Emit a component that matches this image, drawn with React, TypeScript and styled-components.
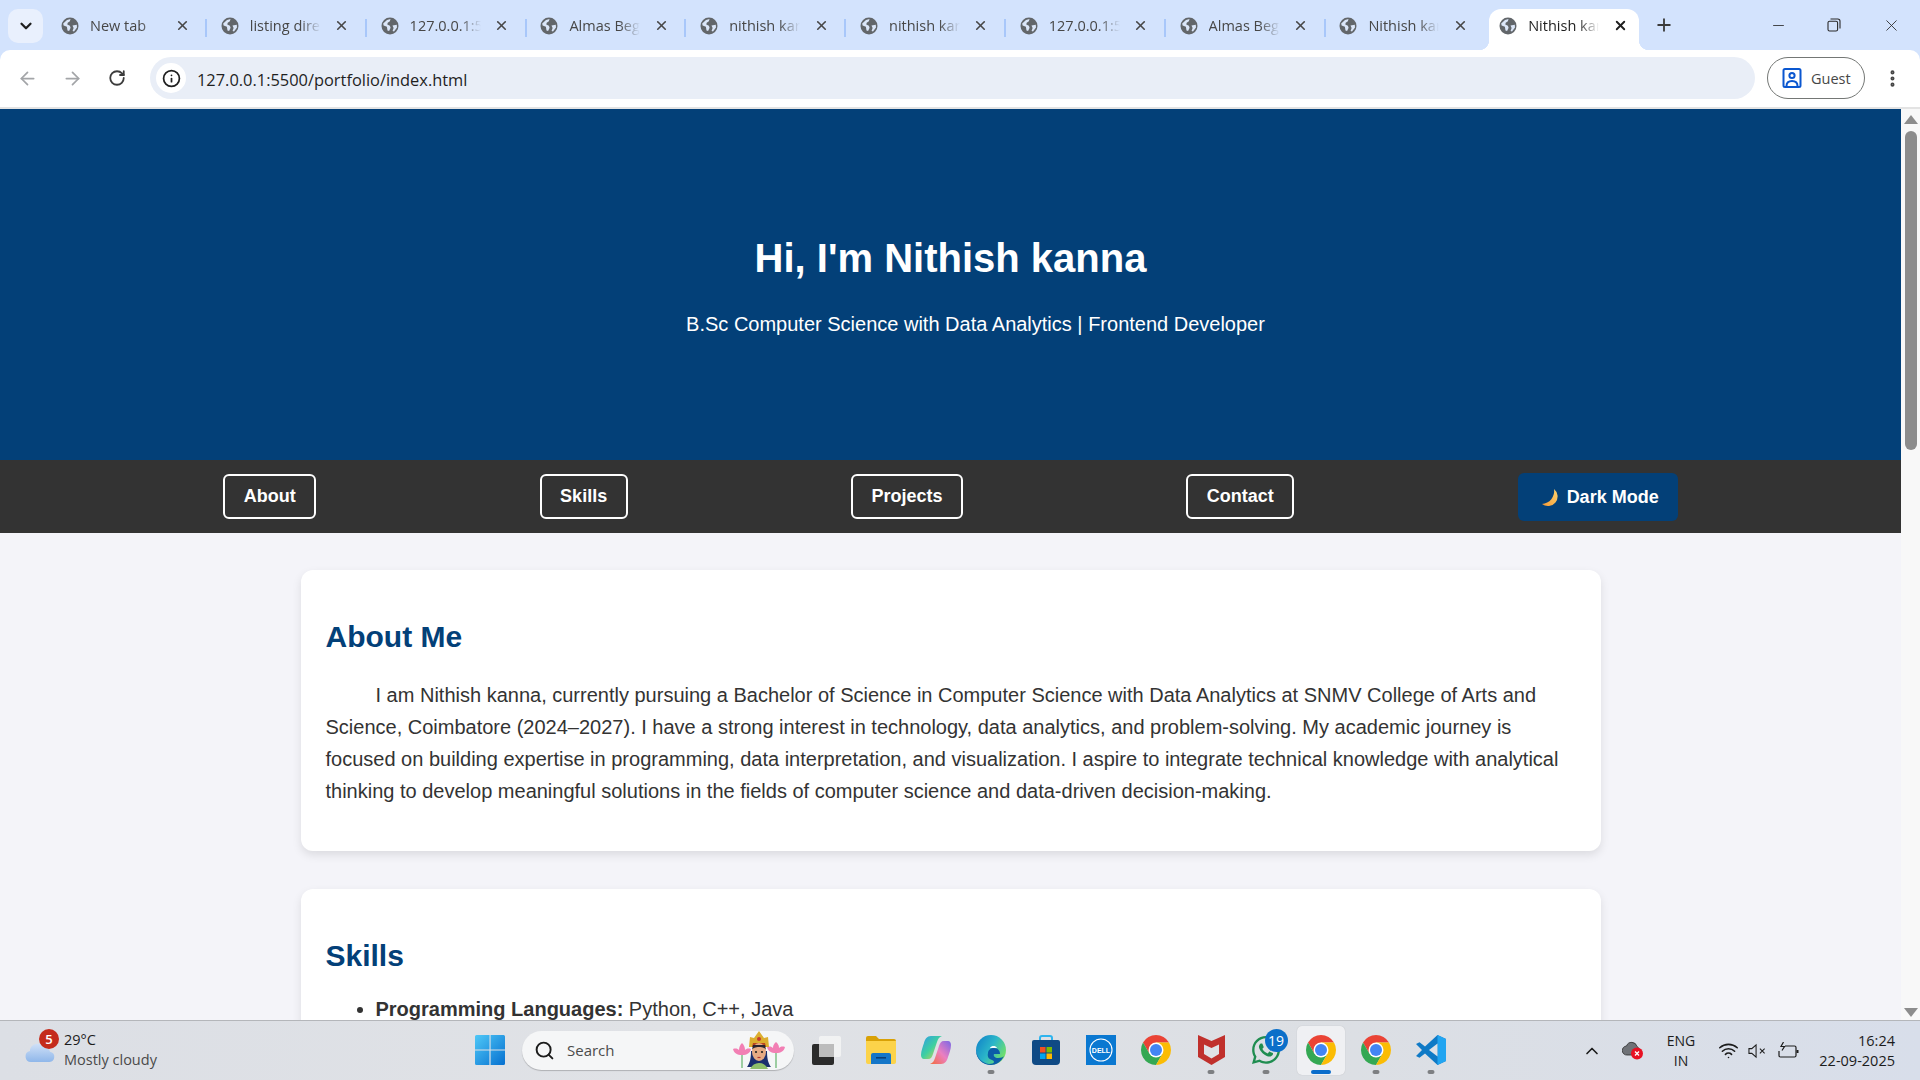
import React from "react";
import styled, { createGlobalStyle } from "styled-components";
import {
  ArrowLeft,
  ArrowRight,
  ChevronDown,
  ChevronUp,
  Info,
  Minus,
  MoreVertical,
  Plus,
  RotateCw,
  Search,
  Wifi,
  X,
} from "lucide-react";
import { FaWhatsapp } from "react-icons/fa";

const GlobalStyle = createGlobalStyle`
  html, body { margin: 0; padding: 0; height: 100%; overflow: hidden; }
  * { box-sizing: border-box; }
  body { font-family: "Liberation Sans", Arial, sans-serif; }
`;

const Screen = styled.div`
  width: 1920px;
  height: 1080px;
  display: flex;
  flex-direction: column;
  overflow: hidden;
  background: #d3e3fd;
`;

/* browser chrome */
const TabStrip = styled.div`
  height: 50px;
  display: flex;
  align-items: flex-end;
  flex-shrink: 0;
  position: relative;
  padding-left: 8px;
  font-family: "Open Sans", "Noto Sans", sans-serif;
`;

const TabSearch = styled.div`
  width: 35px;
  height: 34px;
  margin-bottom: 7px;
  margin-right: 8px;
  border-radius: 10px;
  background: #e9f0fd;
  display: flex;
  align-items: center;
  justify-content: center;
  color: #1f1f1f;
`;

const Tab = styled.div<{ $active?: boolean; $noSep?: boolean }>`
  position: relative;
  width: 150px;
  height: 41px;
  margin-right: 9.8px;
  padding: 0 11px 8px 10px;
  display: flex;
  align-items: center;
  background: ${(p) => (p.$active ? "#fff" : "transparent")};
  border-radius: 12px 12px 0 0;
  color: ${(p) => (p.$active ? "#1f1f1f" : "#474747")};

  &::after {
    content: "";
    position: absolute;
    display: ${(p) => (p.$noSep || p.$active ? "none" : "block")};
    right: -6px;
    top: 10px;
    width: 2px;
    height: 18px;
    background: #a8c7fa;
  }

  ${(p) =>
    p.$active &&
    `
    &::before {
      content: "";
      position: absolute;
      left: -10px;
      bottom: 0;
      width: 10px;
      height: 10px;
      background: radial-gradient(circle at 0 0, transparent 10px, #fff 10.5px);
    }
    &::after {
      display: block;
      right: -10px;
      top: auto;
      bottom: 0;
      width: 10px;
      height: 10px;
      background: radial-gradient(circle at 100% 0, transparent 10px, #fff 10.5px);
    }
  `}
`;

const TabTitle = styled.span`
  flex: 1;
  min-width: 0;
  margin-left: 11px;
  margin-right: 10px;
  font-size: 14.5px;
  white-space: nowrap;
  overflow: hidden;
  -webkit-mask-image: linear-gradient(90deg, #000 68%, transparent 96%);
  mask-image: linear-gradient(90deg, #000 68%, transparent 96%);
`;

const TabClose = styled.span`
  width: 16px;
  height: 16px;
  display: flex;
  align-items: center;
  justify-content: center;
  flex-shrink: 0;
`;

const NewTab = styled.div`
  position: relative;
  margin-left: 3px;
  margin-bottom: 13px;
  width: 24px;
  height: 24px;
  color: #3b3b3b;
  display: flex;
  align-items: center;
  justify-content: center;
`;

const WindowControls = styled.div`
  margin-left: auto;
  height: 50px;
  display: flex;
  align-items: center;
  color: #2b2b2b;
`;

const WindowButton = styled.div<{ $w: number }>`
  width: ${(p) => p.$w}px;
  display: flex;
  align-items: center;
  justify-content: center;
`;

const Toolbar = styled.div`
  height: 59px;
  flex-shrink: 0;
  background: #fff;
  border-radius: 10px 10px 0 0;
  border-bottom: 2px solid #e3e3e3;
  display: flex;
  align-items: center;
  padding-bottom: 1px;
`;

const NavIcon = styled.div<{ $w: number; $color: string }>`
  width: ${(p) => p.$w}px;
  display: flex;
  justify-content: center;
  color: ${(p) => p.$color};
`;

const Omnibox = styled.div`
  width: 1605px;
  height: 42px;
  margin-left: 6px;
  border-radius: 21px;
  background: #e9eef7;
  display: flex;
  align-items: center;
  padding-left: 6px;
  font-family: "Open Sans", "Noto Sans", sans-serif;
  font-size: 16.4px;
  color: #1f1f1f;

  span {
    position: relative;
    top: 1px;
  }
`;

const InfoChip = styled.div`
  width: 30px;
  height: 30px;
  border-radius: 50%;
  background: #fff;
  display: flex;
  align-items: center;
  justify-content: center;
  margin-right: 11px;
`;

const GuestPill = styled.div`
  width: 98px;
  height: 42px;
  margin-left: 12px;
  border: 1.5px solid #747775;
  border-radius: 21px;
  display: flex;
  align-items: center;
  padding-left: 14px;
  gap: 9px;
  font-family: "Open Sans", "Noto Sans", sans-serif;
  font-size: 14.5px;
  color: #474747;
`;

const MenuDots = styled.div`
  width: 55px;
  display: flex;
  justify-content: center;
  color: #474747;
`;

/* the page inside the browser */
const Viewport = styled.div`
  flex: 1;
  min-height: 0;
  display: flex;
`;

const Page = styled.div`
  width: 1901px;
  overflow: hidden;
  background: #f4f4f9;
  color: #333;
`;

const Hero = styled.header`
  height: 351px;
  background: #034078;
  color: #fff;
  text-align: center;
  padding-top: 126px;
`;

const HeroTitle = styled.h1`
  margin: 0 0 32px;
  font-size: 40px;
  line-height: 46px;
  font-weight: 700;
`;

const HeroSub = styled.p`
  margin: 0;
  padding-left: 50px;
  font-size: 20px;
  line-height: 23px;
`;

const Nav = styled.nav`
  height: 73px;
  background: #333;
  display: flex;
  justify-content: space-evenly;
  align-items: center;
`;

const NavLink = styled.a`
  height: 45px;
  padding: 0 18.5px;
  border: 2px solid #fff;
  border-radius: 6px;
  color: #fff;
  font-size: 18px;
  font-weight: 700;
  display: flex;
  align-items: center;
`;

const ThemeButton = styled.button`
  height: 48px;
  width: 160px;
  margin-top: 1px;
  padding: 1px 0 0 22px;
  border: 0;
  border-radius: 6px;
  background: #034078;
  color: #fff;
  font-family: inherit;
  font-size: 18px;
  font-weight: 700;
  display: flex;
  align-items: center;
  gap: 7px;
`;

const Card = styled.section`
  width: 1300px;
  margin: 37px auto 38px;
  padding: 48px 25px 44px;
  background: #fff;
  border-radius: 12px;
  box-shadow: 0 4px 10px rgba(0, 0, 0, 0.1);
`;

const CardTitle = styled.h2<{ $gap: number }>`
  margin: 0 0 ${(p) => p.$gap}px;
  font-size: 30px;
  line-height: 37px;
  font-weight: 700;
  color: #034078;
`;

const Paragraph = styled.p`
  margin: 0;
  font-size: 20px;
  line-height: 32px;
  text-indent: 50px;
`;

const SkillList = styled.ul`
  margin: 0;
  padding: 0 0 0 50px;
  font-size: 20px;
  line-height: 32px;
`;

const Scrollbar = styled.div`
  width: 19px;
  background: #f8f8f8;
  display: flex;
  flex-direction: column;
  align-items: center;
  padding-top: 6px;
`;

const ScrollThumb = styled.div`
  width: 12px;
  height: 319px;
  margin-top: 7px;
  border-radius: 6px;
  background: #8c8c8c;
`;

const ScrollArrow = styled.div<{ $down?: boolean }>`
  width: 0;
  height: 0;
  border-left: 7px solid transparent;
  border-right: 7px solid transparent;
  ${(p) =>
    p.$down
      ? "border-top: 9px solid #8c8c8c; margin-top: auto; margin-bottom: 3px;"
      : "border-bottom: 9px solid #8c8c8c;"}
`;

/* windows taskbar */
const Taskbar = styled.footer`
  height: 60px;
  flex-shrink: 0;
  border-top: 1px solid #b4b6ba;
  background: linear-gradient(90deg, #dcdfe5 0%, #e0e2e6 35%, #dcdfe4 70%, #d8deea 100%);
  display: flex;
  align-items: center;
  font-family: "Open Sans", "Noto Sans", sans-serif;
  color: #1c1c1c;
`;

const Weather = styled.div`
  position: relative;
  width: 462px;
  height: 100%;
  padding-left: 25px;
  display: flex;
  align-items: center;
  gap: 9px;
`;

const WeatherBadge = styled.span`
  position: absolute;
  left: 39px;
  top: 8px;
  width: 20px;
  height: 20px;
  border-radius: 50%;
  background: #c42b1c;
  color: #fff;
  font-size: 13px;
  font-weight: 600;
  display: flex;
  align-items: center;
  justify-content: center;
`;

const WeatherText = styled.div`
  font-size: 14.5px;
  line-height: 20px;
  margin-top: -1px;

  span {
    display: block;
    color: #4a4a4a;
  }
`;

const AppSlot = styled.div<{ $active?: boolean }>`
  position: relative;
  width: 55px;
  height: 100%;
  display: flex;
  align-items: center;
  justify-content: center;
  padding-bottom: 1px;

  &::before {
    content: "";
    position: absolute;
    display: ${(p) => (p.$active ? "block" : "none")};
    left: 3px;
    right: 4px;
    top: 5px;
    bottom: 5px;
    border-radius: 5px;
    background: #eff0f3;
    box-shadow: 0 0 1px rgba(0, 0, 0, 0.2);
  }

  svg {
    position: relative;
  }
`;

const RunDot = styled.span<{ $active?: boolean }>`
  position: absolute;
  left: 50%;
  bottom: 6px;
  width: ${(p) => (p.$active ? 20 : 7)}px;
  height: 4px;
  transform: translateX(-50%);
  border-radius: 2px;
  background: ${(p) => (p.$active ? "#0a6ccb" : "#7d7f82")};
`;

const CountBadge = styled.span`
  position: absolute;
  left: 26px;
  top: 8px;
  width: 23px;
  height: 23px;
  border-radius: 50%;
  background: #0b6fc9;
  color: #fff;
  font-size: 14px;
  display: flex;
  align-items: center;
  justify-content: center;
`;

const SearchBox = styled.div`
  width: 272px;
  height: 39px;
  margin: 0 4.5px 1px 5px;
  border-radius: 20px;
  background: #f5f6f7;
  box-shadow: 0 1px 1px rgba(0, 0, 0, 0.22);
  display: flex;
  align-items: center;
  padding-left: 12px;
  font-size: 15px;
  color: #4c4c4c;
  gap: 12px;
  flex-shrink: 0;

  svg:last-child {
    margin-left: auto;
    margin-right: 8px;
  }
`;

const Tray = styled.div`
  margin-left: auto;
  height: 100%;
  padding-right: 25px;
  display: flex;
  align-items: center;
`;

const TrayItem = styled.div<{ $w: number }>`
  width: ${(p) => p.$w}px;
  display: flex;
  align-items: center;
  justify-content: center;
  text-align: center;
  font-size: 14px;
  line-height: 20px;
`;

const Clock = styled.div`
  width: 86px;
  text-align: right;
  font-size: 14.5px;
  line-height: 20px;
`;

const GlobeIcon = () => (
  <svg width="18" height="18" viewBox="0 0 18 18" style={{ flexShrink: 0 }}>
    <circle cx="9" cy="9" r="8.5" fill="#62666a" />
    <path
      d="M2.2 6.5 6 3l3.5-1-.6 2.2-2.2 1.6-.4 1.7 2.6 1.2.7 2-1.5 3.2-1.6-.5-.6-3.6L2.6 8.6z"
      fill="#dbe6f8"
    />
    <path d="M11.5 8.5 15.8 7.8 16 10.6 13 14.5 11.6 14 12.6 11z" fill="#dbe6f8" />
  </svg>
);

const MoonIcon = () => (
  <svg width="20" height="20" viewBox="0 0 20 20">
    <defs>
      <linearGradient id="moon" x1="0" y1="1" x2="1" y2="0">
        <stop offset="0" stopColor="#f79a35" />
        <stop offset="1" stopColor="#fcd36f" />
      </linearGradient>
    </defs>
    <path d="M14 1A9.600 9.600 0 0 1 2 16 A13 13 0 0 0 14 1z" fill="url(#moon)" />
  </svg>
);

const GuestIcon = () => (
  <svg width="20" height="22" viewBox="0 0 20 22" fill="none" stroke="#0b57d0" strokeWidth="2">
    <rect x="1.5" y="2" width="17" height="18" rx="1.5" />
    <circle cx="10" cy="8.5" r="2.6" />
    <path d="M4.5 19c0-3.5 2.5-5 5.5-5s5.5 1.5 5.5 5" />
  </svg>
);

const RestoreIcon = () => (
  <svg width="14" height="14" viewBox="0 0 14 14" fill="none" stroke="#2b2b2b" strokeWidth="1.1">
    <rect x="1" y="3.2" width="9.6" height="9.8" rx="1.6" />
    <path d="M3.5 1h7.3A2.2 2.2 0 0 1 13 3.2v7.3" />
  </svg>
);

const CloudIcon = () => (
  <svg width="30" height="30" viewBox="0 0 30 30">
    <defs>
      <linearGradient id="cloud" x1="0" y1="0" x2="0" y2="1">
        <stop offset="0" stopColor="#cfe0f7" />
        <stop offset="1" stopColor="#8fb7ea" />
      </linearGradient>
    </defs>
    <circle cx="25" cy="8" r="4" fill="#f08a1d" />
    <path
      d="M6 26a5.5 5.5 0 0 1-1-10.9A7.5 7.5 0 0 1 19 11.5a6 6 0 0 1 6 4.2 5.2 5.2 0 0 1-.5 10.3z"
      fill="url(#cloud)"
    />
  </svg>
);

const WindowsLogo = () => (
  <svg width="30" height="30" viewBox="0 0 30 30">
    <defs>
      <linearGradient id="win" x1="0" y1="0" x2="1" y2="1">
        <stop offset="0" stopColor="#4fc8f7" />
        <stop offset="1" stopColor="#0670d0" />
      </linearGradient>
    </defs>
    <path d="M0 1.5A1.5 1.5 0 0 1 1.5 0h13v14.4H0zM15.6 0h13A1.5 1.5 0 0 1 30 1.5v12.9H15.6zM0 15.6h14.4V30H1.5A1.5 1.5 0 0 1 0 28.5zM15.6 15.6H30v12.9a1.5 1.5 0 0 1-1.5 1.5h-12.9z" fill="url(#win)" />
  </svg>
);

const GoddessIcon = () => (
  <svg width="54" height="38" viewBox="0 0 54 38">
    <path d="M10 22v15M44 22v15" stroke="#63b26a" strokeWidth="1.2" />
    <path d="M1 18c3-1 5 0 6 1 0-3 1-5 3-7 2 2 3 4 3 7 1-1 3-2 6-1-1 4-4 6-9 6s-8-2-9-6z" fill="#f27fb4" />
    <path d="M35 16c3-1 5 0 6 1 0-3 1-4 3-6 2 2 3 3 3 6 1-1 3-2 6-1-1 4-4 6-9 6s-8-2-9-6z" fill="#f27fb4" />
    <path d="M15 36c3-4 4-9 4-16h16c0 7 1 12 4 16z" fill="#1a2f6e" />
    <path d="M18 38c2-4 5-6 9-6s7 2 9 6z" fill="#8fc06b" />
    <path d="M17 16 18 6l4 1 5-7 5 7 4-1 1 10z" fill="#dcae2f" />
    <path d="M21 12h12l1 4H20z" fill="#b9471f" />
    <ellipse cx="27" cy="21" rx="7" ry="9" fill="#e5ab84" />
    <path d="M20 19c1-4 13-4 14 0l-1-5H21z" fill="#2a2430" />
    <circle cx="27" cy="8" r="2" fill="#c6392e" />
    <circle cx="24" cy="21" r="1.1" fill="#222" />
    <circle cx="30" cy="21" r="1.1" fill="#222" />
    <path d="M25.500 26.500h3" stroke="#b3392f" strokeWidth="1.2" />
  </svg>
);

const TaskViewIcon = () => (
  <svg width="30" height="30" viewBox="0 0 30 30">
    <rect x="1" y="9" width="22" height="21" rx="2" fill="#2b2b2b" />
    <rect x="8" y="1" width="22" height="21" rx="2" fill="#f4f4f4" fillOpacity="0.85" />
    <rect x="8" y="9" width="15" height="13" fill="#bcbcbc" />
  </svg>
);

const FolderIcon = () => (
  <svg width="30" height="28" viewBox="0 0 30 28">
    <path d="M0 2a2 2 0 0 1 2-2h8l3 3h15a2 2 0 0 1 2 2v3H0z" fill="#d9a106" />
    <path d="M0 5h30v21a2 2 0 0 1-2 2H2a2 2 0 0 1-2-2z" fill="#fcd34a" />
    <path d="M5 19a2 2 0 0 1 2-2h16a2 2 0 0 1 2 2v9H5z" fill="#1576c8" />
    <rect x="10" y="21" width="10" height="1.6" fill="#0b3f77" />
  </svg>
);

const CopilotIcon = () => (
  <svg width="30" height="28" viewBox="0 0 30 28">
    <defs>
      <linearGradient id="copA" x1="0" y1="0" x2="1" y2="1">
        <stop offset="0" stopColor="#2f9be8" />
        <stop offset="0.5" stopColor="#3fd0a0" />
        <stop offset="1" stopColor="#f2d13e" />
      </linearGradient>
      <linearGradient id="copB" x1="1" y1="0" x2="0" y2="1">
        <stop offset="0" stopColor="#7a68e6" />
        <stop offset="0.5" stopColor="#ec7fc0" />
        <stop offset="1" stopColor="#f26b3a" />
      </linearGradient>
    </defs>
    <path d="M10 0h11c-3 1-4 3-5 6l-4 12c-1 3-2 5-5 5H3c-2 0-3-2-3-4 0-4 2-9 3-12 1-4 3-7 7-7z" fill="url(#copA)" />
    <path d="M20 28H9c3-1 4-3 5-6l4-12c1-3 2-5 5-5h4c2 0 3 2 3 4 0 4-2 9-3 12-1 4-3 7-7 7z" fill="url(#copB)" />
  </svg>
);

const EdgeIcon = () => (
  <svg width="30" height="30" viewBox="0 0 30 30">
    <defs>
      <linearGradient id="edgeA" x1="0" y1="0" x2="1" y2="0.6">
        <stop offset="0" stopColor="#0e7ec9" />
        <stop offset="0.55" stopColor="#2bb6c9" />
        <stop offset="1" stopColor="#71e06a" />
      </linearGradient>
    </defs>
    <circle cx="15" cy="15" r="15" fill="url(#edgeA)" />
    <path d="M28 21c-3 6-8 9-13 9-8 0-15-6-15-15 1 8 6 13 13 14 6 0 6-3 3-4-3-1-5-3-4-7 0-3 3-5 6-5 4 0 6 3 6 6H18c-1 2 1 4 4 4 3 0 5-1 6-2z" fill="#0b5ca8" />
    <path d="M15.500 11.500c2-1 4.500-.5 5.500 1.500h-7c.3-.7.800-1.200 1.500-1.500z" fill="#fff" fillOpacity="0.95" />
  </svg>
);

const StoreIcon = () => (
  <svg width="30" height="30" viewBox="0 0 30 30">
    <path d="M9 6V3a2 2 0 0 1 2-2h8a2 2 0 0 1 2 2v3" fill="none" stroke="#2fb4ee" strokeWidth="2" />
    <path d="M1 7a2 2 0 0 1 2-2h24a2 2 0 0 1 2 2v19a4 4 0 0 1-4 4H5a4 4 0 0 1-4-4z" fill="#0f4a85" />
    <rect x="9" y="12" width="5.500" height="5.500" fill="#f25022" />
    <rect x="15.500" y="12" width="5.500" height="5.500" fill="#7fba00" />
    <rect x="9" y="18.500" width="5.500" height="5.500" fill="#00a4ef" />
    <rect x="15.500" y="18.500" width="5.500" height="5.500" fill="#ffb900" />
  </svg>
);

const DellIcon = () => (
  <svg width="30" height="30" viewBox="0 0 30 30">
    <rect width="30" height="30" fill="#0a78d1" />
    <circle cx="15" cy="15" r="11" fill="none" stroke="#fff" strokeWidth="1.1" />
    <text x="15" y="17.500" fontSize="7" fontWeight="700" fill="#fff" textAnchor="middle" fontFamily="Liberation Sans, sans-serif">
      DELL
    </text>
  </svg>
);

const ChromeIcon = () => (
  <svg width="30" height="30" viewBox="2 2 44 44">
    <path d="M43.050 13A22 22 0 0 0 4.950 13L14.500 29.500 24 13z" fill="#ea4335" />
    <path d="M4.950 13A22 22 0 0 0 24 46L33.500 29.500H14.500z" fill="#34a853" />
    <path d="M24 46A22 22 0 0 0 43.050 13H24L33.500 29.500z" fill="#fbbc04" />
    <circle cx="24" cy="24" r="11" fill="#fff" />
    <circle cx="24" cy="24" r="8.800" fill="#4285f4" />
  </svg>
);

const McAfeeIcon = () => (
  <svg width="27" height="30" viewBox="0 0 27 30">
    <path d="M0 0l13.500 6L27 0v22l-13.500 8L0 22z" fill="#c0302c" />
    <path d="M6 9.500l7.500 3.500L21 9.500v9.500l-7.500 4.500L6 19z" fill="#dfe1e5" />
  </svg>
);

const VsCodeIcon = () => (
  <svg width="30" height="30" viewBox="0 0 30 30">
    <path d="M21.500 0 30 4v22l-8.500 4L9 18.500l-5.500 4.300L0 21l6-6-6-6 3.500-1.800L9 11.500z" fill="#0f7ac6" />
    <path d="M21.500 0 30 4v22l-8.500 4z" fill="#22a5f1" />
    <path d="M21.500 8.500 13 15l8.500 6.500z" fill="#dfe2e8" />
  </svg>
);

const TrayCloudIcon = () => (
  <svg width="22" height="19" viewBox="0 0 22 19">
    <path d="M5 14a4.500 4.500 0 0 1-.500-9A5.500 5.500 0 0 1 15 5.500 4 4 0 0 1 16 12v2z" fill="#6f7277" stroke="#2c2c2c" strokeWidth="0.8" />
    <circle cx="15" cy="12.500" r="6" fill="#e81123" />
    <path d="M13 10.500l4 4m0-4-4 4" stroke="#fff" strokeWidth="1.300" />
  </svg>
);

const SpeakerIcon = () => (
  <svg width="20" height="16" viewBox="0 0 20 16" fill="none" stroke="#1c1c1c" strokeWidth="1.100">
    <path d="M1 5.500v5h3l4.500 4V1.500L4 5.500z" />
    <path d="M12.500 5.500l5 5m0-5-5 5" />
  </svg>
);

const BatteryIcon = () => (
  <svg width="21" height="17" viewBox="0 0 21 17" fill="none" stroke="#1c1c1c" strokeWidth="1.200">
    <path d="M7 4h9.500A1.500 1.500 0 0 1 18 5.500v8a1.500 1.500 0 0 1-1.500 1.500H2.500A1.500 1.500 0 0 1 1 13.500V9" />
    <path d="M5.500 0 3 4.500h3.500L4 8.500" />
    <path d="M19.500 8v3" strokeWidth="2" />
  </svg>
);

const tabs = [
  "New tab",
  "listing dire",
  "127.0.0.1:5",
  "Almas Beg",
  "nithish kar",
  "nithish kar",
  "127.0.0.1:5",
  "Almas Beg",
  "Nithish kar",
  "Nithish kar",
];

const navLinks = ["About", "Skills", "Projects", "Contact"];

export default function App() {
  return (
    <Screen>
      <GlobalStyle />
      <TabStrip>
        <TabSearch>
          <ChevronDown size={18} strokeWidth={3} />
        </TabSearch>
        {tabs.map((title, i) => (
          <Tab key={i} $active={i === 9} $noSep={i === 8}>
            <GlobeIcon />
            <TabTitle>{title}</TabTitle>
            <TabClose>
              <X size={15} strokeWidth={i === 9 ? 3 : 2.6} />
            </TabClose>
          </Tab>
        ))}
        <NewTab>
          <Plus size={20} strokeWidth={2.2} />
        </NewTab>
        <WindowControls>
          <WindowButton $w={56}>
            <Minus size={17} strokeWidth={1.2} />
          </WindowButton>
          <WindowButton $w={56}>
            <RestoreIcon />
          </WindowButton>
          <WindowButton $w={58}>
            <X size={19} strokeWidth={1.1} />
          </WindowButton>
        </WindowControls>
      </TabStrip>

      <Toolbar>
        <NavIcon $w={54} $color="#a3a5a8">
          <ArrowLeft size={21} strokeWidth={2} />
        </NavIcon>
        <NavIcon $w={36} $color="#a3a5a8">
          <ArrowRight size={21} strokeWidth={2} />
        </NavIcon>
        <NavIcon $w={54} $color="#3c3c3c">
          <RotateCw size={18} strokeWidth={2.4} />
        </NavIcon>
        <Omnibox>
          <InfoChip>
            <Info size={19} strokeWidth={2.2} />
          </InfoChip>
          <span>127.0.0.1:5500/portfolio/index.html</span>
        </Omnibox>
        <GuestPill>
          <GuestIcon />
          Guest
        </GuestPill>
        <MenuDots>
          <MoreVertical size={21} strokeWidth={2.6} />
        </MenuDots>
      </Toolbar>

      <Viewport>
        <Page>
          <Hero>
            <HeroTitle>Hi, I'm Nithish kanna</HeroTitle>
            <HeroSub>B.Sc Computer Science with Data Analytics | Frontend Developer</HeroSub>
          </Hero>
          <Nav>
            {navLinks.map((link) => (
              <NavLink key={link}>{link}</NavLink>
            ))}
            <ThemeButton>
              <MoonIcon />
              Dark Mode
            </ThemeButton>
          </Nav>
          <Card>
            <CardTitle $gap={24}>About Me</CardTitle>
            <Paragraph>
              I am Nithish kanna, currently pursuing a Bachelor of Science in Computer Science with Data Analytics at
              SNMV College of Arts and Science, Coimbatore (2024–2027). I have a strong interest in technology, data
              analytics, and problem-solving. My academic journey is focused on building expertise in programming, data
              interpretation, and visualization. I aspire to integrate technical knowledge with analytical thinking to
              develop meaningful solutions in the fields of computer science and data-driven decision-making.
            </Paragraph>
          </Card>
          <Card>
            <CardTitle $gap={19}>Skills</CardTitle>
            <SkillList>
              <li>
                <strong>Programming Languages:</strong> Python, C++, Java
              </li>
            </SkillList>
          </Card>
        </Page>
        <Scrollbar>
          <ScrollArrow />
          <ScrollThumb />
          <ScrollArrow $down />
        </Scrollbar>
      </Viewport>

      <Taskbar>
        <Weather>
          <CloudIcon />
          <WeatherBadge>5</WeatherBadge>
          <WeatherText>
            29°C
            <span>Mostly cloudy</span>
          </WeatherText>
        </Weather>
        <AppSlot>
          <WindowsLogo />
        </AppSlot>
        <SearchBox>
          <Search size={21} strokeWidth={2.2} color="#1c1c1c" />
          Search
          <GoddessIcon />
        </SearchBox>
        <AppSlot>
          <TaskViewIcon />
        </AppSlot>
        <AppSlot>
          <FolderIcon />
        </AppSlot>
        <AppSlot>
          <CopilotIcon />
        </AppSlot>
        <AppSlot>
          <EdgeIcon />
          <RunDot />
        </AppSlot>
        <AppSlot>
          <StoreIcon />
        </AppSlot>
        <AppSlot>
          <DellIcon />
        </AppSlot>
        <AppSlot>
          <ChromeIcon />
        </AppSlot>
        <AppSlot>
          <McAfeeIcon />
          <RunDot />
        </AppSlot>
        <AppSlot>
          <FaWhatsapp size={32} color="#1f8d50" />
          <CountBadge>19</CountBadge>
          <RunDot />
        </AppSlot>
        <AppSlot $active>
          <ChromeIcon />
          <RunDot $active />
        </AppSlot>
        <AppSlot>
          <ChromeIcon />
          <RunDot />
        </AppSlot>
        <AppSlot>
          <VsCodeIcon />
          <RunDot />
        </AppSlot>
        <Tray>
          <TrayItem $w={40}>
            <ChevronUp size={20} strokeWidth={2} />
          </TrayItem>
          <TrayItem $w={42}>
            <TrayCloudIcon />
          </TrayItem>
          <TrayItem $w={54}>
            ENG
            <br />
            IN
          </TrayItem>
          <TrayItem $w={40}>
            <Wifi size={21} strokeWidth={1.8} />
          </TrayItem>
          <TrayItem $w={19}>
            <SpeakerIcon />
          </TrayItem>
          <TrayItem $w={42}>
            <BatteryIcon />
          </TrayItem>
          <Clock>
            16:24
            <br />
            22-09-2025
          </Clock>
        </Tray>
      </Taskbar>
    </Screen>
  );
}
